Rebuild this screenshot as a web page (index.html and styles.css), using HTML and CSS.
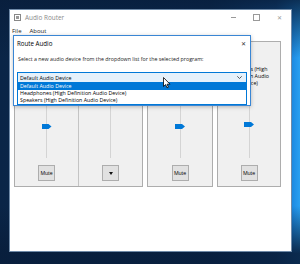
FILE: index.html
```html
<!DOCTYPE html>
<html>
<head>
<meta charset="utf-8">
<link rel="stylesheet" href="styles.css">
</head>
<body>
<div class="desktop">
  <div class="window">
    <div class="titlebar">
      <svg class="appicon" width="7" height="7" viewBox="0 0 7 7"><rect x="0.5" y="0.5" width="6" height="6" fill="#fff" stroke="#888"/><rect x="2" y="2" width="3" height="3" fill="#999"/></svg>
      <span class="title">Audio Router</span>
      <span class="spacer"></span>
      <span class="ctl ctl-min"></span>
      <span class="ctl ctl-max"></span>
      <span class="ctl ctl-close">✕</span>
    </div>
    <div class="menubar">
      <span class="menu">File</span>
      <span class="menu">About</span>
    </div>
    <div class="client">
      <div class="panel">
        <div class="col">
          <div class="label">Default</div>
          <div class="slider"><div class="track"></div><div class="thumb" style="top:32px"></div></div>
          <div class="btn">Mute</div>
        </div>
        <div class="col">
          <div class="label">Default</div>
          <div class="slider"><div class="track"></div></div>
          <div class="btn"><span class="tri"></span></div>
        </div>
      </div>
      <div class="panel">
        <div class="col">
          <div class="label">Headphones (High Definition Audio Device)</div>
          <div class="slider"><div class="track"></div><div class="thumb" style="top:32px"></div></div>
          <div class="btn">Mute</div>
        </div>
      </div>
      <div class="panel">
        <div class="col">
          <div class="label">Speakers (High Definition Audio Device)</div>
          <div class="slider"><div class="track"></div><div class="thumb" style="top:30px"></div></div>
          <div class="btn">Mute</div>
        </div>
      </div>
    </div>
  </div>

  <div class="dialog">
    <div class="dlg-title">
      <span>Route Audio</span>
      <span class="dlg-close">✕</span>
    </div>
    <div class="dlg-body">
      <div class="prompt">Select a new audio device from the dropdown list for the selected program:</div>
      <div class="combo">
        <span>Default Audio Device</span>
        <svg width="5" height="3" viewBox="0 0 5 3"><path d="M0.3 0.3 L2.5 2.5 L4.7 0.3" fill="none" stroke="#333" stroke-width="0.8"/></svg>
      </div>
      <div class="list">
        <div class="item sel">Default Audio Device</div>
        <div class="item">Headphones (High Definition Audio Device)</div>
        <div class="item">Speakers (High Definition Audio Device)</div>
      </div>
    </div>
  </div>

  <svg class="cursor" width="8" height="12" viewBox="0 0 8 12"><path d="M0.5 0.5 L0.5 9.5 L2.6 7.6 L4 10.8 L5.4 10.2 L4.1 7.2 L7 7.2 Z" fill="#fff" stroke="#000" stroke-width="0.8" stroke-linejoin="round"/></svg>
</div>
</body>
</html>
```
FILE: styles.css
```css
* { box-sizing: border-box; }
html, body { margin: 0; padding: 0; }
body {
  width: 300px;
  height: 264px;
  overflow: hidden;
  font-family: "Open Sans", "Noto Sans", sans-serif;
  color: #000;
}
.desktop {
  position: relative;
  width: 300px;
  height: 264px;
  padding: 9px 0 0 9px;
  background:
    linear-gradient(180deg, rgba(8,30,60,0.85) 0%, rgba(8,30,60,0) 22%, rgba(8,30,60,0) 78%, rgba(8,30,60,0.9) 96%),
    linear-gradient(90deg, #0a2547 0%, #0c2e58 70%, #14599e 92%, #1f8fe6 98%, #2aa0f0 100%);
}
.window {
  width: 283px;
  height: 243px;
  background: #fff;
  border: 1px solid #6f8aa8;
  display: flex;
  flex-direction: column;
}
.titlebar {
  height: 15px;
  display: flex;
  align-items: center;
  padding-left: 4px;
  font-size: 6.4px;
}
.appicon { margin-right: 4px; }
.title { color: #8a8a8a; }
.spacer { flex: 1; }
.ctl {
  width: 23px;
  height: 15px;
  display: flex;
  align-items: center;
  justify-content: center;
}
.ctl-min::after {
  content: "";
  width: 5px;
  height: 1px;
  background: #999;
}
.ctl-max::after {
  content: "";
  width: 5px;
  height: 5px;
  border: 1px solid #999;
}
.ctl-close { font-size: 6px; color: #999; }
.menubar {
  height: 11px;
  display: flex;
  align-items: center;
  gap: 8px;
  padding-left: 2px;
  font-size: 6px;
  color: #222;
  background: #fff;
}
.client {
  flex: 1;
  display: flex;
  gap: 4px;
  padding: 5px 0 0 4px;
  align-items: flex-start;
}
.panel {
  display: flex;
  height: 146px;
  border: 1px solid #adadad;
  background: #f0f0f0;
}
.panel:nth-child(1) { width: 129px; }
.panel:nth-child(1) .col + .col { border-left: 1px solid #c4c4c4; }
.panel:nth-child(2) { width: 66px; }
.panel:nth-child(3) { width: 64px; }
.col {
  flex: 1;
  display: flex;
  flex-direction: column;
  align-items: center;
}
.label {
  height: 50px;
  padding: 24px 2px 0;
  text-align: center;
  font-size: 5.3px;
  line-height: 7px;
  width: 100%;
}
.slider {
  position: relative;
  width: 12px;
  height: 66px;
}
.track {
  width: 1px;
  height: 100%;
  margin: 0 auto;
  background: #d4d4d4;
}
.thumb {
  position: absolute;
  left: 1px;
  width: 10px;
  height: 5px;
  background: #0078d7;
  clip-path: polygon(0 0, 70% 0, 100% 50%, 70% 100%, 0 100%);
}
.btn {
  margin-top: 7px;
  width: 17px;
  height: 16px;
  border: 1px solid #adadad;
  background: #e1e1e1;
  font-size: 5.2px;
  letter-spacing: -0.1px;
  display: flex;
  align-items: center;
  justify-content: center;
}
.tri {
  width: 0;
  height: 0;
  border-left: 2.5px solid transparent;
  border-right: 2.5px solid transparent;
  border-top: 3px solid #111;
}
.dialog {
  position: absolute;
  left: 13px;
  top: 35px;
  width: 238px;
  height: 71px;
  border: 1px solid #3a86d4;
  background: #fff;
  box-shadow: 0 1px 4px rgba(0,0,0,0.25);
  display: flex;
  flex-direction: column;
}
.dlg-title {
  height: 15px;
  background: #fff;
  display: flex;
  align-items: center;
  justify-content: space-between;
  padding: 0 4px 0 3px;
  font-size: 6.2px;
}
.dlg-close { font-size: 6px; color: #333; }
.dlg-body {
  flex: 1;
  padding: 4px 3px 0 3px;
  background: #fff;
}
.prompt {
  font-size: 5.3px;
  line-height: 8px;
  padding-left: 1px;
  color: #222;
}
.combo {
  margin-top: 9px;
  height: 11px;
  border: 1px solid #0078d7;
  background: #e5f1fb;
  display: flex;
  align-items: center;
  justify-content: space-between;
  padding: 0 4px 0 2px;
  font-size: 5.3px;
}
.list {
  border: 1px solid #0078d7;
  border-top: none;
  background: #fff;
}
.item {
  height: 7px;
  line-height: 7px;
  font-size: 5.3px;
  padding-left: 2px;
}
.item.sel { background: #0078d7; color: #fff; }
.cursor {
  position: absolute;
  left: 163px;
  top: 77px;
}
```
